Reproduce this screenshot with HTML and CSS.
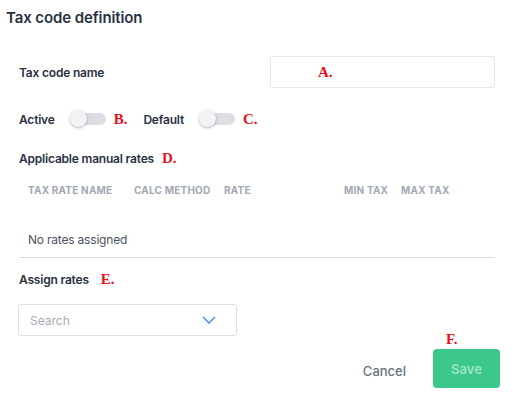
FILE: index.html
```html
<!DOCTYPE html>
<html lang="en">
<head>
  <meta charset="UTF-8" />
  <title>Tax code definition</title>
  <link rel="stylesheet" href="styles.css">
</head>
<body>
  <div class="dialog">
    <h1>Tax code definition</h1>

    <div class="row name-row">
      <label class="label">Tax code name</label>
      <div class="input"><span class="mark mark-a">A.</span></div>
    </div>

    <div class="row toggles">
      <span class="label">Active</span>
      <span class="toggle"><span class="knob"></span></span>
      <span class="mark">B.</span>
      <span class="label default-label">Default</span>
      <span class="toggle"><span class="knob"></span></span>
      <span class="mark">C.</span>
    </div>

    <div class="row section-title">
      <span class="label">Applicable manual rates</span>
      <span class="mark">D.</span>
    </div>

    <div class="rates">
      <div class="rates-head">
        <span class="col-name">TAX RATE NAME</span>
        <span class="col-calc">CALC METHOD</span>
        <span class="col-rate">RATE</span>
        <span class="col-min">MIN TAX</span>
        <span class="col-max">MAX TAX</span>
      </div>
      <div class="rates-empty">No rates assigned</div>
    </div>

    <div class="row section-title assign">
      <span class="label">Assign rates</span>
      <span class="mark mark-e">E.</span>
    </div>

    <div class="search">
      <span>Search</span>
      <svg width="14" height="8" viewBox="0 0 14 8"><path d="M1 1l6 6 6-6" fill="none" stroke="#4a90e2" stroke-width="1.5"/></svg>
    </div>

    <div class="footer">
      <button class="cancel">Cancel</button>
      <div class="save-wrap">
        <span class="mark mark-f">F.</span>
        <button class="save">Save</button>
      </div>
    </div>
  </div>
</body>
</html>
```

FILE: styles.css
```css
body {
  margin: 0;
  background: #fff;
  font-family: Inter, Roboto, sans-serif;
  color: #273142;
}

.dialog {
  padding: 8px 13px 0 6px;
  width: 508px;
  box-sizing: border-box;
}

h1 {
  margin: 0;
  font-size: 15px;
  font-weight: 600;
  line-height: 20px;
  letter-spacing: -0.1px;
}

.row {
  display: flex;
  align-items: center;
  padding-left: 13px;
}

.label {
  font-size: 12px;
  font-weight: 600;
  letter-spacing: -0.2px;
}

.mark {
  font-family: "Liberation Serif", serif;
  font-weight: bold;
  color: #e8101a;
  font-size: 15px;
  margin-left: 8px;
}

.name-row {
  margin-top: 28px;
  justify-content: space-between;
}

.input {
  width: 225px;
  height: 32px;
  box-sizing: border-box;
  border: 1px solid #e8e8e8;
  border-radius: 2px;
  display: flex;
  align-items: center;
  padding-left: 47px;
}

.mark-a {
  margin-left: 0;
}

.toggles {
  margin-top: 15px;
  height: 32px;
}

.toggle {
  position: relative;
  width: 34px;
  height: 12px;
  border-radius: 6px;
  background: #dddee3;
  margin-left: 17px;
}

.knob {
  position: absolute;
  left: -2px;
  top: -3px;
  width: 17px;
  height: 17px;
  border-radius: 50%;
  background: #f3f3f5;
  box-shadow: 0 1px 3px rgba(0, 0, 0, 0.3);
}

.default-label {
  margin-left: 16px;
}

.section-title {
  margin-top: 15px;
}

.rates {
  margin-left: 13px;
  border-bottom: 1px solid #dcdde2;
}

.rates-head {
  display: flex;
  font-size: 10px;
  font-weight: 700;
  color: #a3a8b4;
  letter-spacing: 0.2px;
  padding: 17px 0 0 9px;
  height: 14px;
}

.col-name { width: 106px; }
.col-calc { width: 90px; }
.col-rate { width: 120px; }
.col-min { width: 57px; }

.rates-empty {
  font-size: 12px;
  color: #4b5262;
  padding: 34px 0 10px 9px;
  letter-spacing: -0.2px;
}

.assign {
  margin-top: 13px;
}

.mark-e {
  margin-left: 12px;
}

.search {
  margin: 16px 0 0 12px;
  width: 219px;
  height: 32px;
  box-sizing: border-box;
  border: 1px solid #dfe0e4;
  border-radius: 3px;
  display: flex;
  align-items: center;
  justify-content: space-between;
  padding: 0 20px 0 11px;
  font-size: 12px;
  color: #a4aab6;
}

.footer {
  display: flex;
  justify-content: flex-end;
  align-items: flex-end;
  margin: -5px -5px 0 0;
}

.cancel {
  border: none;
  background: none;
  font-family: inherit;
  font-size: 13px;
  font-weight: 500;
  color: #6b7280;
  margin: 0 27px 9px 0;
  padding: 0;
}

.save-wrap {
  display: flex;
  flex-direction: column;
  align-items: flex-start;
}

.mark-f {
  margin: 0 0 1px 13px;
}

.save {
  width: 67px;
  height: 39px;
  border: none;
  border-radius: 4px;
  background: #3cc88b;
  color: #9ee3c3;
  font-family: inherit;
  font-size: 13px;
  font-weight: 600;
}
```
